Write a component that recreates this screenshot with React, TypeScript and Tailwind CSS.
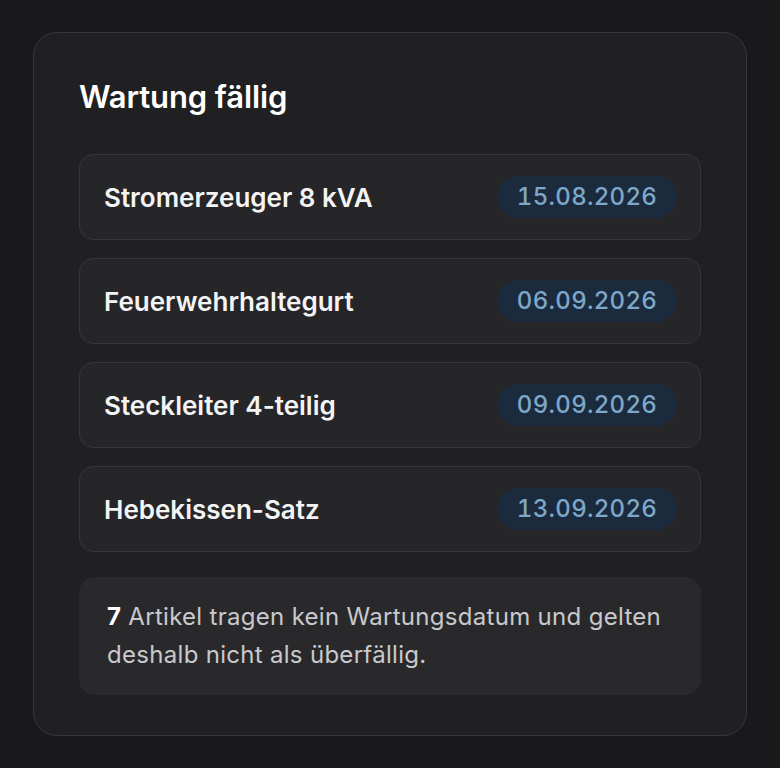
import React from 'react';

const items = [
  { name: 'Stromerzeuger 8 kVA', date: '15.08.2026' },
  { name: 'Feuerwehrhaltegurt', date: '06.09.2026' },
  { name: 'Steckleiter 4-teilig', date: '09.09.2026' },
  { name: 'Hebekissen-Satz', date: '13.09.2026' },
];

export default function App() {
  return (
    <div
      className="min-h-screen w-full bg-[#19191b] pt-[32px] pl-[33px]"
      style={{ fontFamily: 'Inter, "Noto Sans", sans-serif' }}
    >
      <div className="w-[714px] h-[704px] rounded-[24px] border border-[#38383b] bg-[#202022] px-[45px] pt-[44px]">
        <h2 className="text-[31px] leading-[40px] font-semibold text-white tracking-[-0.1px]">
          Wartung fällig
        </h2>

        <div className="mt-[37px] flex flex-col gap-[18px]">
          {items.map((item) => (
            <div
              key={item.name}
              className="h-[86px] rounded-[14px] border border-[#353538] bg-[#262629] flex items-center justify-between pl-[24px] pr-[23px]"
            >
              <span className="text-[26px] font-semibold text-[#f4f4f5]">{item.name}</span>
              <span className="h-[42px] w-[180px] rounded-full bg-[#1b2b3d] flex items-center justify-center text-[24px] font-medium text-[#7ea7c8] tracking-[0.3px] tabular-nums">
                {item.date}
              </span>
            </div>
          ))}
        </div>

        <div className="mt-[25px] rounded-[16px] bg-[#29292b] pl-[28px] pr-[24px] pt-[21px] pb-[21px]">
          <p className="text-[24px] leading-[38px] text-[#c9c9cd] tracking-[0.3px]">
            <span className="font-bold text-white">7</span> Artikel tragen kein Wartungsdatum und gelten
            deshalb nicht als überfällig.
          </p>
        </div>
      </div>
    </div>
  );
}
